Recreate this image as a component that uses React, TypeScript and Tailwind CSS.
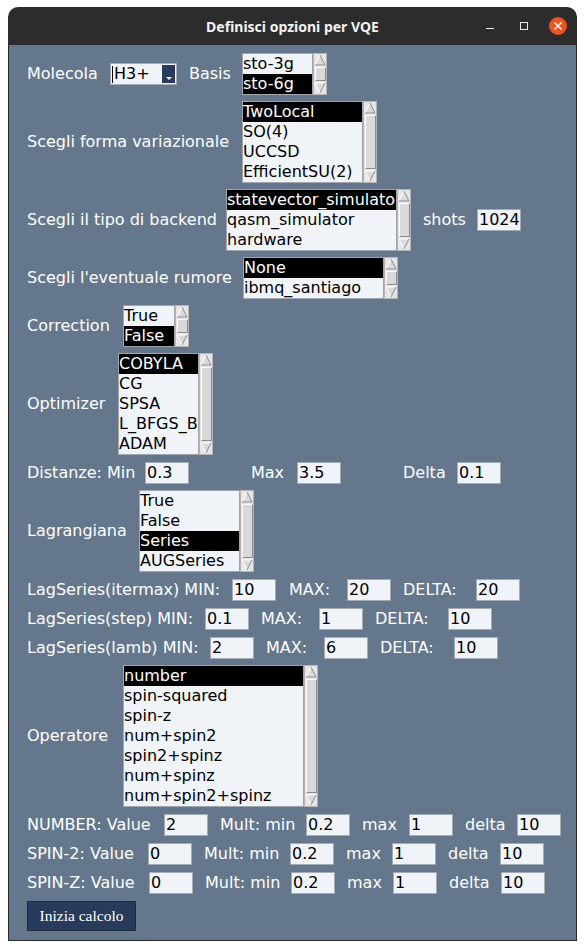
import React from "react";

function Arrow({ down }: { down?: boolean }) {
  return (
    <svg width="12" height="12" viewBox="0 0 12 12" className="block">
      {down ? (
        <>
          <polygon points="6,11 11,1 1,1" fill="#dadada" />
          <line x1="1" y1="1" x2="11" y2="1" stroke="#ffffff" strokeWidth="1" />
          <line x1="1" y1="1" x2="6" y2="11" stroke="#ffffff" strokeWidth="1" />
          <line x1="11" y1="1" x2="6" y2="11" stroke="#8c8c8c" strokeWidth="1" />
        </>
      ) : (
        <>
          <polygon points="6,1 11,11 1,11" fill="#dadada" />
          <line x1="1" y1="11" x2="6" y2="1" stroke="#ffffff" strokeWidth="1" />
          <line x1="6" y1="1" x2="11" y2="11" stroke="#8c8c8c" strokeWidth="1" />
          <line x1="1" y1="11" x2="11" y2="11" stroke="#8c8c8c" strokeWidth="1" />
        </>
      )}
    </svg>
  );
}

function Scroll() {
  return (
    <div className="flex w-[14px] shrink-0 flex-col items-center border border-[#b4b4b4] bg-[#e6e6e6]">
      <div className="flex h-[12px] items-center justify-center">
        <Arrow />
      </div>
      <div className="my-[1px] w-[11px] flex-1 border border-b-[#8c8c8c] border-l-white border-r-[#8c8c8c] border-t-white bg-[#d9d9d9]" />
      <div className="flex h-[12px] items-center justify-center">
        <Arrow down />
      </div>
    </div>
  );
}

function ListBox({
  items,
  sel,
  w,
  h,
  ml = "",
}: {
  items: string[];
  sel: number;
  w: string;
  h: string;
  ml?: string;
}) {
  return (
    <div className={`flex shrink-0 ${h} ${ml}`}>
      <div className={`overflow-hidden border border-[#a0a6ad] bg-[#f0f3f7] ${w}`}>
        {items.map((it, i) => (
          <div
            key={it}
            className={`h-[20px] whitespace-nowrap leading-[20px] ${
              i === sel ? "bg-black text-white" : "text-black"
            }`}
          >
            {it}
          </div>
        ))}
      </div>
      <Scroll />
    </div>
  );
}

function L({ w, ml = "", children }: { w: string; ml?: string; children: React.ReactNode }) {
  return <span className={`shrink-0 whitespace-nowrap ${w} ${ml}`}>{children}</span>;
}

function Inp({ v, ml = "" }: { v: string; ml?: string }) {
  return (
    <div
      className={`h-[22px] w-[44px] shrink-0 border border-[#a4abb3] bg-[#f0f3f7] pl-[1px] leading-[20px] text-black ${ml}`}
    >
      {v}
    </div>
  );
}

export default function App() {
  return (
    <div className="min-h-[951px] w-[586px] bg-white pt-[7px] font-['DejaVu_Sans',sans-serif] text-[16px]">
      <div className="ml-[8px] w-[569px]">
        {/* title bar */}
        <div className="grid h-[38px] grid-cols-[1fr_auto_1fr] items-center rounded-t-[10px] bg-[#2c2c2c]">
          <div />
          <div className="font-['Noto_Sans',sans-serif] text-[14px] font-bold text-[#f2f2f2]">
            Definisci opzioni per VQE
          </div>
          <div className="flex items-center justify-end pr-[2px]">
            <div className="flex w-[34px] justify-center">
              <div className="flex h-[6px] items-end">
                <div className="h-[1px] w-[8px] bg-[#ececec]" />
              </div>
            </div>
            <div className="flex w-[34px] justify-center">
              <div className="h-[8px] w-[8px] border border-[#ececec]" />
            </div>
            <div className="flex w-[34px] justify-center">
              <div className="flex h-[18px] w-[18px] items-center justify-center rounded-full bg-[#e95420]">
                <svg width="8" height="8" viewBox="0 0 8 8">
                  <line x1="0.5" y1="0.5" x2="7.5" y2="7.5" stroke="white" strokeWidth="1.4" />
                  <line x1="7.5" y1="0.5" x2="0.5" y2="7.5" stroke="white" strokeWidth="1.4" />
                </svg>
              </div>
            </div>
          </div>
        </div>

        {/* body */}
        <div className="border-x border-b border-[#2a2a2a] bg-[#64778d] pb-[9px] pl-[18px] pt-[5px] text-white">
          {/* Molecola */}
          <div className="flex h-[48px] items-center">
            <L w="w-[83px]">Molecola</L>
            <div className="flex h-[22px] w-[67px] shrink-0 items-center border border-[#a4abb3] bg-[#f0f3f7] text-black">
              <span className="ml-[1px] h-[17px] w-[1px] bg-black" />
              <span className="ml-[1px] flex-1 leading-[20px]">H3+</span>
              <div className="mr-[1px] flex h-[18px] w-[13px] items-end justify-center bg-[#283b5b] pb-[3px]">
                <svg width="6" height="3" viewBox="0 0 6 3" className="block">
                  <polygon points="0,0 6,0 3,3" fill="white" />
                </svg>
              </div>
            </div>
            <L w="w-[53px]" ml="ml-[12px]">
              Basis
            </L>
            <ListBox items={["sto-3g", "sto-6g"]} sel={1} w="w-[71px]" h="h-[42px]" />
          </div>

          {/* forma variazionale */}
          <div className="flex h-[88px] items-center">
            <L w="w-[215px]">Scegli forma variazionale</L>
            <ListBox
              items={["TwoLocal", "SO(4)", "UCCSD", "EfficientSU(2)"]}
              sel={0}
              w="w-[121px]"
              h="h-[82px]"
            />
          </div>

          {/* backend */}
          <div className="flex h-[68px] items-center">
            <L w="w-[199px]">Scegli il tipo di backend</L>
            <ListBox
              items={["statevector_simulator", "qasm_simulator", "hardware"]}
              sel={0}
              w="w-[171px]"
              h="h-[62px]"
            />
            <L w="w-[54px]" ml="ml-[12px]">
              shots
            </L>
            <Inp v="1024" />
          </div>

          {/* rumore */}
          <div className="flex h-[48px] items-center">
            <L w="w-[216px]">Scegli l'eventuale rumore</L>
            <ListBox items={["None", "ibmq_santiago"]} sel={0} w="w-[141px]" h="h-[42px]" />
          </div>

          {/* correction */}
          <div className="flex h-[48px] items-center">
            <L w="w-[96px]">Correction</L>
            <ListBox items={["True", "False"]} sel={1} w="w-[52px]" h="h-[42px]" />
          </div>

          {/* optimizer */}
          <div className="flex h-[108px] items-center">
            <L w="w-[91px]">Optimizer</L>
            <ListBox
              items={["COBYLA", "CG", "SPSA", "L_BFGS_B", "ADAM"]}
              sel={0}
              w="w-[81px]"
              h="h-[102px]"
            />
          </div>

          {/* distanze */}
          <div className="flex h-[29px] items-center">
            <L w="w-[118px]">Distanze: Min</L>
            <Inp v="0.3" />
            <L w="w-[46px]" ml="ml-[62px]">
              Max
            </L>
            <Inp v="3.5" />
            <L w="w-[54px]" ml="ml-[62px]">
              Delta
            </L>
            <Inp v="0.1" />
          </div>

          {/* lagrangiana */}
          <div className="flex h-[88px] items-center">
            <L w="w-[112px]">Lagrangiana</L>
            <ListBox
              items={["True", "False", "Series", "AUGSeries"]}
              sel={2}
              w="w-[101px]"
              h="h-[82px]"
            />
          </div>

          {/* LagSeries rows */}
          <div className="flex h-[29px] items-center">
            <L w="w-[205px]">LagSeries(itermax) MIN:</L>
            <Inp v="10" />
            <L w="w-[58px]" ml="ml-[13px]">
              MAX:
            </L>
            <Inp v="20" />
            <L w="w-[73px]" ml="ml-[12px]">
              DELTA:
            </L>
            <Inp v="20" />
          </div>
          <div className="flex h-[29px] items-center">
            <L w="w-[178px]">LagSeries(step) MIN:</L>
            <Inp v="0.1" />
            <L w="w-[58px]" ml="ml-[12px]">
              MAX:
            </L>
            <Inp v="1" />
            <L w="w-[73px]" ml="ml-[12px]">
              DELTA:
            </L>
            <Inp v="10" />
          </div>
          <div className="flex h-[29px] items-center">
            <L w="w-[183px]">LagSeries(lamb) MIN:</L>
            <Inp v="2" />
            <L w="w-[58px]" ml="ml-[12px]">
              MAX:
            </L>
            <Inp v="6" />
            <L w="w-[74px]" ml="ml-[12px]">
              DELTA:
            </L>
            <Inp v="10" />
          </div>

          {/* operatore */}
          <div className="flex h-[148px] items-center">
            <L w="w-[96px]">Operatore</L>
            <ListBox
              items={[
                "number",
                "spin-squared",
                "spin-z",
                "num+spin2",
                "spin2+spinz",
                "num+spinz",
                "num+spin2+spinz",
              ]}
              sel={0}
              w="w-[181px]"
              h="h-[142px]"
            />
          </div>

          {/* NUMBER */}
          <div className="flex h-[29px] items-center">
            <L w="w-[137px]">NUMBER: Value</L>
            <Inp v="2" />
            <L w="w-[86px]" ml="ml-[12px]">
              Mult: min
            </L>
            <Inp v="0.2" />
            <L w="w-[47px]" ml="ml-[12px]">
              max
            </L>
            <Inp v="1" />
            <L w="w-[52px]" ml="ml-[12px]">
              delta
            </L>
            <Inp v="10" />
          </div>
          <div className="flex h-[29px] items-center">
            <L w="w-[121px]">SPIN-2: Value</L>
            <Inp v="0" />
            <L w="w-[86px]" ml="ml-[12px]">
              Mult: min
            </L>
            <Inp v="0.2" />
            <L w="w-[46px]" ml="ml-[12px]">
              max
            </L>
            <Inp v="1" />
            <L w="w-[52px]" ml="ml-[12px]">
              delta
            </L>
            <Inp v="10" />
          </div>
          <div className="flex h-[29px] items-center">
            <L w="w-[122px]">SPIN-Z: Value</L>
            <Inp v="0" />
            <L w="w-[86px]" ml="ml-[12px]">
              Mult: min
            </L>
            <Inp v="0.2" />
            <L w="w-[46px]" ml="ml-[12px]">
              max
            </L>
            <Inp v="1" />
            <L w="w-[52px]" ml="ml-[12px]">
              delta
            </L>
            <Inp v="10" />
          </div>

          {/* button */}
          <div className="mt-[4px] flex">
            <button className="flex h-[30px] w-[109px] items-center justify-center border border-[#1e2d47] bg-[#283b5b] font-['Liberation_Serif',serif] text-[15.5px] text-white">
              Inizia calcolo
            </button>
          </div>
        </div>
      </div>
    </div>
  );
}
